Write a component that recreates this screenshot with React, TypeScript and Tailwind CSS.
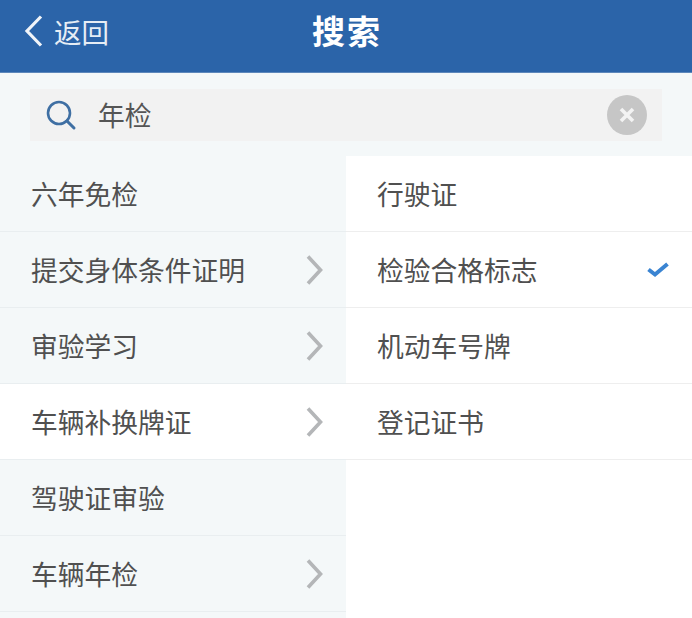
const left = [
  { t: "六年免检", a: false, w: false },
  { t: "提交身体条件证明", a: true, w: false },
  { t: "审验学习", a: true, w: false },
  { t: "车辆补换牌证", a: true, w: true },
  { t: "驾驶证审验", a: false, w: false },
  { t: "车辆年检", a: true, w: false },
];
const right = [
  { t: "行驶证", c: false },
  { t: "检验合格标志", c: true },
  { t: "机动车号牌", c: false },
  { t: "登记证书", c: false },
];

function Chevron() {
  return (
    <svg width="18" height="32" viewBox="0 0 18 32" fill="none" className="shrink-0">
      <path d="M2 2.5 L14.5 16 L2 29.5" stroke="#b4b6b8" strokeWidth="3.6" />
    </svg>
  );
}

export default function App() {
  return (
    <div className="w-[692px] h-[618px] overflow-hidden bg-white flex flex-col text-[26.75px] text-[#505050] font-['Noto_Sans_CJK_SC',sans-serif]">
      <header className="h-[73px] shrink-0 bg-[#2b64a9] relative flex items-center justify-center border-b border-[#5d88bb] pb-[12px]">
        <div className="absolute left-[24px] top-[15px] flex items-center gap-[11px] text-[#e6edf5] text-[27.5px]">
          <svg width="19" height="32" viewBox="0 0 19 32" fill="none">
            <path d="M17 1.5 L3 16 L17 30.5" stroke="#f0f4f9" strokeWidth="3.2" />
          </svg>
          <span className="leading-[32px]">返回</span>
        </div>
        <span className="ml-[2px] text-[33px] font-bold text-white leading-none tracking-[2px]">搜索</span>
      </header>
      <div className="h-[83px] shrink-0 bg-[#f4f8f9] px-[30px] pt-[16px]">
        <div className="h-[52px] w-[632px] bg-[#f2f2f2] flex items-center pl-[15px] pr-[15px]">
          <svg width="32" height="32" viewBox="0 0 32 32" fill="none" className="shrink-0">
            <circle cx="14" cy="14" r="11" stroke="#3f6fa3" strokeWidth="2.6" />
            <path d="M22 22 L29 29" stroke="#3f6fa3" strokeWidth="3" strokeLinecap="round" />
          </svg>
          <span className="ml-[21px] flex-1 text-[#555555]">年检</span>
          <div className="w-[40px] h-[40px] rounded-full bg-[#c6c6c6] flex items-center justify-center">
            <svg width="18" height="18" viewBox="0 0 18 18" fill="none">
              <path d="M3 3 L15 15 M15 3 L3 15" stroke="#f3f3f3" strokeWidth="3.6" />
            </svg>
          </div>
        </div>
      </div>
      <div className="flex flex-1 min-h-0">
        <div className="w-[346px] shrink-0">
          {left.map((i) => (
            <div
              key={i.t}
              className={`h-[76px] flex items-center justify-between pl-[31px] pr-[22px] border-b border-[#e9eef0] ${i.w ? "bg-white" : "bg-[#f4f8f9]"}`}
            >
              <span className="pt-[1px]">{i.t}</span>
              {i.a && <Chevron />}
            </div>
          ))}
          <div className="h-[10px] bg-[#f4f8f9]" />
        </div>
        <div className="flex-1 bg-white">
          {right.map((i) => (
            <div key={i.t} className="h-[76px] flex items-center justify-between pl-[31px] pr-[22px] border-b border-[#eeeeee]">
              <span className="pt-[1px]">{i.t}</span>
              {i.c && (
                <svg width="24" height="18" viewBox="0 0 24 18" fill="none">
                  <path d="M2.5 8.5 L9 13.5 L21.5 3" stroke="#3a84d2" strokeWidth="4" />
                </svg>
              )}
            </div>
          ))}
        </div>
      </div>
    </div>
  );
}
